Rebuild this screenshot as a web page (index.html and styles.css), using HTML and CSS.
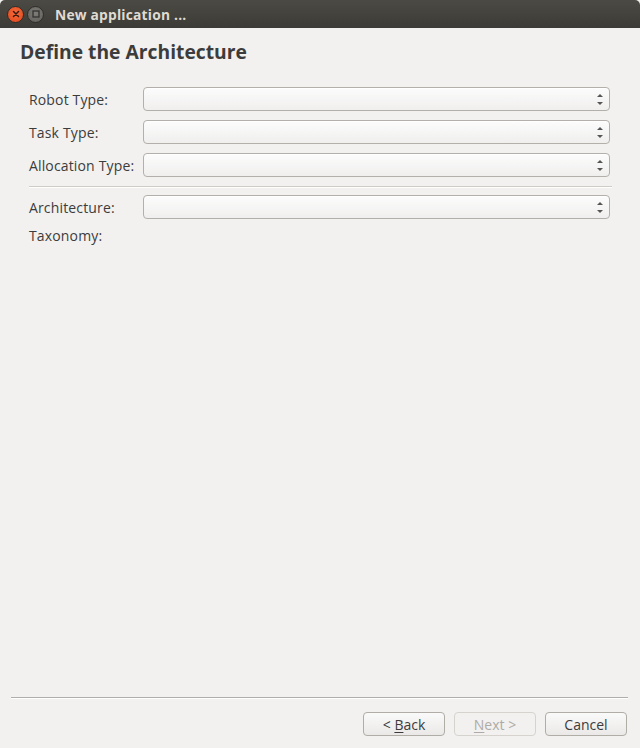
FILE: index.html
```html
<!DOCTYPE html>
<html>
<head>
<meta charset="utf-8">
<link rel="stylesheet" href="styles.css">
</head>
<body>
<div class="window">
  <div class="titlebar">
    <span class="wbtn close"><svg width="14" height="14" viewBox="0 0 14 14"><path d="M4.5 4.5 L9.5 9.5 M9.5 4.5 L4.5 9.5" stroke="#3a1a10" stroke-width="1.5" stroke-linecap="round"/></svg></span>
    <span class="wbtn max"><svg width="14" height="14" viewBox="0 0 14 14"><rect x="4" y="4" width="6" height="6" fill="none" stroke="#333" stroke-width="1.3"/></svg></span>
    <span class="wtitle">New application ...</span>
  </div>
  <div class="content">
    <h1 class="heading">Define the Architecture</h1>
    <div class="form">
      <div class="row"><span class="label">Robot Type:</span><div class="combo"><span class="arrows"></span></div></div>
      <div class="row"><span class="label">Task Type:</span><div class="combo"><span class="arrows"></span></div></div>
      <div class="row"><span class="label">Allocation Type:</span><div class="combo"><span class="arrows"></span></div></div>
      <div class="sep"></div>
      <div class="row"><span class="label">Architecture:</span><div class="combo"><span class="arrows"></span></div></div>
      <div class="row plain"><span class="label">Taxonomy:</span></div>
    </div>
    <div class="spacer"></div>
    <div class="bottomsep"></div>
    <div class="buttons">
      <button class="btn">&lt; <u>B</u>ack</button>
      <button class="btn disabled"><u>N</u>ext &gt;</button>
      <button class="btn">Cancel</button>
    </div>
  </div>
</div>
</body>
</html>
```
FILE: styles.css
```css
html, body {
  margin: 0;
  padding: 0;
  width: 640px;
  height: 748px;
  overflow: hidden;
  background: #f2f1f0;
  font-family: "Open Sans", "Noto Sans", sans-serif;
  color: #3c3c3c;
}
.window {
  display: flex;
  flex-direction: column;
  height: 748px;
}
.titlebar {
  height: 28px;
  flex: none;
  background: linear-gradient(#4b4a45, #3c3b37);
  display: flex;
  align-items: center;
  padding-left: 7px;
  box-sizing: border-box;
  border-radius: 5px 5px 0 0;
}
.wbtn {
  width: 17px;
  height: 17px;
  border-radius: 50%;
  display: flex;
  align-items: center;
  justify-content: center;
  margin-right: 3px;
  box-sizing: border-box;
}
.wbtn.close {
  background: radial-gradient(circle at 50% 40%, #f46b3c, #e2461a);
  border: 1px solid #2f2e2a;
}
.wbtn.max {
  background: radial-gradient(circle at 50% 40%, #7e7d78, #5e5d58);
  border: 1px solid #2f2e2a;
}
.wtitle {
  margin-left: 8px;
  color: #dfdbd2;
  font-weight: bold;
  font-size: 13.8px;
  letter-spacing: 0.2px;
}
.content {
  flex: 1;
  display: flex;
  flex-direction: column;
}
.heading {
  margin: 11px 0 0 20px;
  font-size: 19.3px;
  font-weight: bold;
  color: #3c3c3c;
  height: 25px;
  line-height: 25px;
}
.form {
  margin: 23px 30px 0 29px;
  display: flex;
  flex-direction: column;
  gap: 9px;
}
.row {
  display: flex;
  align-items: center;
  height: 24px;
}
.row.plain { height: 18px; margin-top: -2px; }
.label {
  width: 114px;
  flex: none;
  font-size: 14px;
  letter-spacing: 0.15px;
  color: #3c3c3c;
  white-space: nowrap;
}
.combo {
  flex: 1;
  height: 24px;
  box-sizing: border-box;
  border: 1px solid #b3b0ab;
  border-radius: 4px;
  background: linear-gradient(#fcfcfc, #f0efee);
  position: relative;
  box-shadow: inset 0 1px 0 #ffffff;
}
.arrows {
  position: absolute;
  right: 5px;
  top: 6px;
  width: 7px;
  height: 11px;
}
.arrows::before, .arrows::after {
  content: "";
  position: absolute;
  left: 0;
  border-left: 3px solid transparent;
  border-right: 3px solid transparent;
}
.arrows::before {
  top: 0;
  border-bottom: 3px solid #555;
}
.arrows::after {
  bottom: 0;
  border-top: 3px solid #555;
}
.sep {
  height: 1px;
  background: #cfccc8;
  border-bottom: 1px solid #ffffff;
  margin: 0 -2px -2px 0;
}
.spacer { flex: 1; }
.bottomsep {
  height: 1px;
  background: #b0aeaa;
  border-bottom: 1px solid #ffffff;
  margin: 0 12px 0 11px;
}
.buttons {
  display: flex;
  justify-content: flex-end;
  gap: 9px;
  padding: 13px 13px 12px 0;
}
.btn {
  width: 82px;
  height: 24px;
  box-sizing: border-box;
  border: 1px solid #b0aca6;
  border-radius: 4px;
  background: linear-gradient(#fafafa, #ebe9e7);
  font-family: "Open Sans", "Noto Sans", sans-serif;
  font-size: 14px;
  color: #3c3c3c;
  padding: 0;
}
.btn u { text-underline-offset: 2px; }
.btn.disabled {
  color: #aeaba6;
  border-color: #d6d3cf;
  background: #f2f1f0;
}
```
